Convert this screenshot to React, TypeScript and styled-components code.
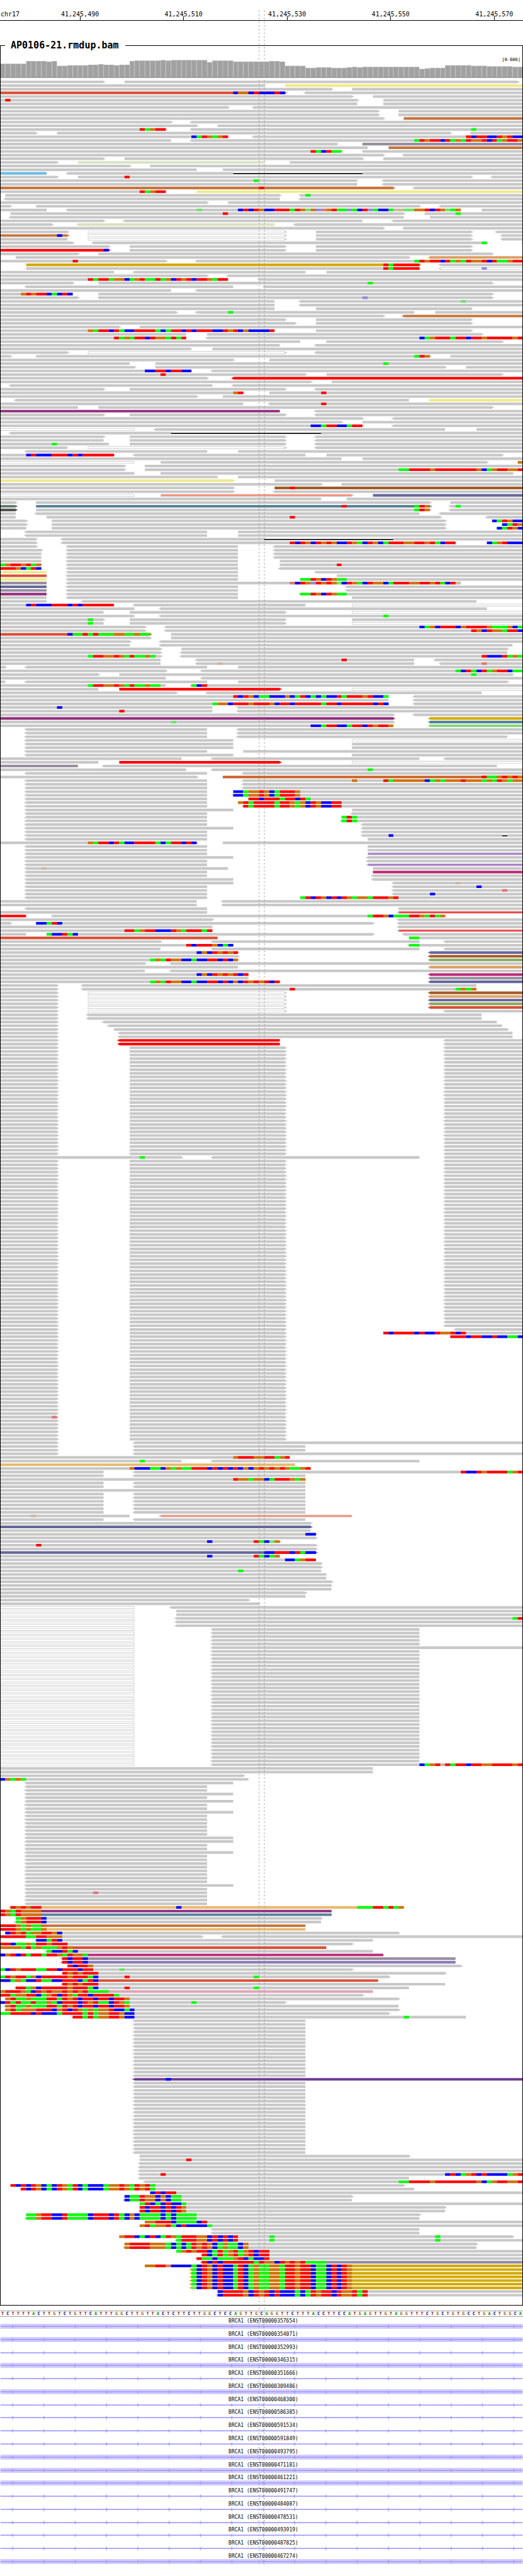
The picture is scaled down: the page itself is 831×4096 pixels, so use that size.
import React from "react";
import styled, { createGlobalStyle } from "styled-components";

/* ---------- scale ---------- */

const BASES = 101;
const BASE_W = 9.9;
const ROW_H = 7;
const READ_H = 5;
const VIEW_X = 1.2;
const VIEW_W = 997.6;
const xOf = (base: number) => Math.round(base * BASE_W);

/* ---------- data ---------- */

const TICKS = ["41,245,490", "41,245,510", "41,245,530", "41,245,550", "41,245,570"];

const SEQUENCE =
  "TCTTTTACTTGTCTGTTCATTTGGCTTGTTACTCTTCTTGGCTCCAGTTGCAGGTTCTTTACCTTCCATGAGTTGTAGGTTTCTGCTGTGCCTGACTGGCA";

/* [number of bases, bar height] */
const COVERAGE: [number, number][] = [
  [5, 26], [4, 31], [1, 30], [1, 31], [2, 22], [4, 23], [2, 24], [1, 25], [2, 24], [1, 23], [2, 24],
  [1, 31], [5, 32], [1, 33], [1, 32], [7, 33], [1, 29], [4, 32], [7, 30], [2, 31], [1, 30], [4, 22],
  [2, 18], [3, 19], [3, 18], [1, 19], [1, 20], [1, 19], [11, 20], [1, 16], [1, 17], [3, 18], [5, 23],
  [3, 22], [5, 21], [2, 20],
];

/*
 * One line per pileup row, in bases from the left edge of the region.
 *   12-40>   read, with < or > where it has a strand tip; a leading letter picks its colour
 *   @12rgb   mismatching bases from position 12 (capitals: low quality)
 *   =45-70   deletion
 *   5x ...   row repeated
 */
const PILEUP = `
0-20> 24-100>
0-51> Y55-101
0-64> 68-101
S0-55> @45boobrbbbrb <59-101
0-68> 72-101
0-69> 74-101 @1r
0-69 74-101
0-44> <49-101
2x 0-73> 77-101
0-74> C78-101
0-33> <37-101
0-38> 42-101
0-32> @27rgorr <37-101 @91g
0-7> 11-87> <91-101
0-44> @37bgrogor <49-101 @90rbrrbbrorbb
0-33 <37-101 @80grorrbrgogroorbrgorro
0-65> V70-101
0-71 C75-101
0-66> @60rgbrgg 70-101
0-74> <78-101
0-20> 24-70> 74-101
0-11> L15-51> 56-101
0-25> 29-101
0-38 43-101
K0-9 <13-101 =45-70
0-11> 15-91> @24r <95-101
0-69 @49g <74-101
0-69 <74-101
C0-76> @50r <80-101
0-32 @27rgorr Y38-101
1-54> <58-101 @59g
<1-54 <58-101
0-40> 44-101
0-2> 7-81> <85-101
0-9 <13-89 @38G @46brbrobbrrrgroGoBRorggBgbrBgbbgOOGGoorbroGgo 93-101
2-78> @43r 82-101 @88g
<2-78 83-101
0-20> <24-70 <76-101
0-10> L<15-53 <57-101
0-74> <78-101
0-13> W17-55> 61-91> <96-101
C0-13> @11b W17-55> 61-91> <97-101
0-13 W17-55> 61-91> <97-101
0-14> <18-94 @93g <101-101
0-21> 25-55> 61-91>
R0-21> @20b 25-55> 61-91>
0-15> 19-95>
3-79> N<83-101
0-32> @14r <38-101 @80grorrbrgogroorbrggorr
M5-81> @74rgrrrrr <85-101
5-81> @74rgrrrrr W<85-101 @93B
0-22 <26-59 63-101
0-40> <44-101
0-44 @17rgrrgoobgorggrgobrorbrrogrr <50-101
0-14> 19-95> @71g
<5-45 <51-101
0-33 <38-101
0-14 @4ororrbgbrb 19-95>
0-15> 19-95> @70B
0-53 <58-101 @89G
0-53 <58-101
0-53 61-91>
0-34> <38-80 @44g 84-101
0-74> C<78-101
0-55> 61-91>
0-57> 61-91>
0-23> 27-101
0-53 @17ogrrbrgbbrrrrgbgrrbrbrrrbbrorbobbbbr 61-91>
0-36 40-93>
0-36 @22rgogrrbroogrgr <40-101 @81bgorrrgrrbrrorrrrror
0-58 63-97>
0-54 <61-101
0-37 41-101
0-13> W17-55> <61-101
0-2> 7-83> @80gro 87-101
0-45> 52-101
0-25 30-101 @74g
0-26> 30-86> 90-101
0-37 @28bbrrbrrbb <41-101
0-59> @31r 63-97>
0-40> R<45-101
0-60> 64-101
<2-41 <45-101
0-20> 25-55> <61-101
0-47> @45or 52-101 @62r
0-38> 43-101
<3-79 Y<83-101
0-47 <52-101 @62r
0-15 19-95>
P0-54 <61-101
0-20> 25-55> <61-101
0-70> <76-101
0-66> 70-101
0-70> @60bbgrrbbgrr <76-101
W0-26 <30-86 92-101
<2-101 =33-62
0-20> 25-55> <61-101
0-20 25-55> <61-101
0-21 @10g 25-55> <61-101
0-13 W17-55> <61-101
<5-40 46-101
0-22> @5brbbbrrrbrbrrrrrr <26-59 63-97>
0-66 70-101
W0-26 31-94> 100-101 @100o
0-24> 28-101
0-24> 28-101 @77ggrrrrorrrrrrrrobgorroor
0-26 31-99>
0-42 46-101
Y0-45> 53-101
0-62> 66-101
0-45> E53-101 @56r
0-45> <53-101
W0-26 F31-68> I72-101
0-62 67-101
0-3> 7-83> 87-101
T0-3> U7-83> @66r @80gro <87-101 @88g
D0-3> 7-83> @80gro <87-101
0-3 <7-81 <85-101
0-3 9-85> @56r <94-101
0-5> 10-86> 95-101 @95bgrobb
0-5> 10-86> 97-101 @97bgro
0-5 10-86> 96-101 @96bgrob
2x <5-40 46-101
0-7> <12-101 =51-76
0-7> <12-88 @56rbrobrorobbrogbrobgrrroorrorgbrr 94-101 @94bgorbbb
0-7> <13-46 <53-101
0-8> <13-46 <53-101
2x 0-8 <13-46 <53-101
0-8 <13-46 54-101
0-8 @0gorrorgo <13-46 54-101 @65r
0-8 @0rrrobgrb <13-46 <54-101
Y0-9 <13-46 <61-101
S0-9 <13-46 65-101
Y0-9 <13-46 58-101 @58ggrobrogg
V0-9 <13-89 @56RbroBroroGbrogbroobgrrroorrorgbrO
I0-9 <13-46 <67-101
V0-9 <13-46 <67-101
P0-9 <13-46 <58-101 @58ggrobrogg
0-9 <13-46 68-101
0-9 <16-92
0-22 @5brbbbrrrbrbrrrrrr <26-59 W68-101
0-26 <31-94
0-20 25-55> W68-101
0-26 <31-101 @74g
0-20> @17g 25-55> 68-101
0-20 @17g 25-55> W68-101
0-28> <32-101 @81bgobrrrborrrrogggobg
0-28> <32-101 @91robroogrrb
S0-29> @13bggrgrgggooggogg 33-101
0-29> 33-101
0-25> <31-101
0-25 <31-99
0-31> 35-98>
0-31> <35-98
0-31> @17grroorogrggog <35-101 @93rbbbrgog
0-31 <38-80 @66r <84-101
0-31 <38-80 @42O <85-101 @93R
0-1> <5-40 46-101
0-32> <39-101 @88gbrgbrgorrbgg
0-19> 23-99> @91g
0-32 <39-101
0-1 <5-40 46-98>
0-32 @17grroorogrggogg <37-101 @37gbr
0-19 R23-54> W68-101
0-34> <40-93
0-75 @45rbrobggbbbobgrbgbgbbrgrrrorbbg <80-101
0-75 <80-101
0-75 @41goobrrrorrrobrrbrrrrrgrrbrrrrrrbrb <80-101
0-41 @11b <46-101
0-41 @23r <46-101
0-76> <80-101
P0-76> M<83-101
0-76> @33G U<83-101
0-76 @60bbgrrbbgrrbrorro G<83-101
2x <5-40 <46-101
<5-40 <46-98
<5-45 W68-101
2x <5-45 68-101
<5-40 47-101
<5-45 68-101
0-35 <41-81 <86-101
0-19 R23-54> W68-101
V0-15 <20-96
0-36 <41-101 @71g
<5-40 <47-101
0-38> H43-101 @93rggororo
<5-40 <47-101 @68o @74rgoooooobgogooorooogogrogoo
2x <5-40 <47-101
<5-40 45-101 @45bbgoorobgrrro
<5-40 <45-101 @45bbgoorobgrrro
<5-40 48-101 @48rrbrrrgrrbrg
<5-40 46-101 @46orgrrrrgrrogobrobbrr
<5-40 <47-101 @47rgrrrrgrrogobrobbrr
<5-45 68-101
<5-40 <68-101
<5-40 66-101 @66grg
<5-40 <66-101 @66grg
<5-40 <70-101
<5-45 <70-101
<5-40 <70-101
<5-40 <70-101 @75b =97-98
<5-40 71-101
0-38> @17ogrrbrgbbrrrrgbgrrbrb 43-101
2x <5-40 71-101
<5-40 J71-101
<5-45 <71-101
<5-40 <71-101
<5-40 J<71-101
<5-44 @8O 72-101
<5-40 Q72-101
<5-40 <72-101
<5-45 <72-101
<5-45 <76-101 @88O
<5-40 <76-101 @92b
<5-40 <76-101 @97R
<5-40 <76-101 @83b
<5-40 58-101 @58grbrobrbrogoogrrror
2x 0-38 <43-101
<5-40 77-101
0-40 Z<77-101
R0-5 10-86> @71grrobgggrrogrgo
0-41> <77-101
0-2> 7-72> @7bbgrb <77-101
0-41 <77-101
0-41 @24rrgorrbbbrogrrrgr Z<77-101
0-5 9-72> @9gbbrgb <78-101
S0-42 79-101 @79gg
0-31> <41-81 <86-101
0-45 @36rbrrrobgb <79-101 @79gg
0-31 <41-81 <86-101
0-46> @38bobroror I<83-101
0-46> E<83-101
0-46> @29gogroobbgbbrrbrbo A<83-101
0-28> <33-101
0-46 N<83-101
0-28 <33-101
0-48 @38bobrororbr Q<83-101
0-48 V<83-101
0-54 @29gogroobbgbbrrbrbobrororbr I<83-101
0-11> <16-92
0-11> <16-92 @56r @88gogo
0-11> W17-55> E<83-101
0-11> W17-55> N<83-101
0-11> W17-55> I<83-101
0-11> W17-55> A<83-101
0-11> W17-55> S<83-101
0-11> W17-55> <86-101
2x 0-11> <17-93
0-11> <20-96
0-11> <21-97
0-11> 22-98>
2x 0-11> <23-99
2x 0-11> R<23-54 <86-101
30x 0-11> 25-55> <86-101
0-35> @27g <41-81 <86-101
46x 0-11> 25-55> <86-101
0-11> 25-55> <88-101
0-11> 25-55> 74-101 @74rbrrrrbrbbroorbr
0-11> 25-55> 87-101 @87rrrbrrbbrbbggb
21x 0-11> 25-55>
0-11> @10R 25-55>
6x 0-11> 25-55>
0-11> <26-101
2x 0-11> <26-59
0-11> <26-101
0-56 @45orrroorrgor
0-35 @27g <41-81
X0-57
0-59 @25obbbggbogoggrrrbrbrbrboborororoggor
0-20 <26-101 @89rbbrorrrrgor
0-20 <26-59
0-59 @45roogoobgrrrogo
2x 0-20 <26-59
0-59
6x 0-20 <26-59
0-25 @6O F<31-68
0-20 <26-59
0-60>
I0-60>
0-60
0-61> @59bb
0-61>
0-54> @40b @49rgbGo
0-61> @7r
0-61>
I0-61> @51bbrrrbrgbb
0-54 @40b @49rgbgo
0-61 @55bbgorr
2x 0-62>
0-62 @46g
2x 0-63
0-64>
2x 0-64
0-59>
0-59
0-48>
0-50>
W0-26 <33-101
2x W0-26 34-101
W0-26 <34-101 @99gr
2x W0-26 <34-101
5x W0-26 <41-81
W0-26 <41-101
31x W0-26 <41-81
W0-26 <41-101 @81bgorOrgrrbrroorrrror
2x 0-72
0-47>
0-48 @0bogog
<5-45
2x <5-40
<5-45
<5-40
<5-45
2x <5-40
<5-45
6x <5-40
2x <5-45
2x <5-40
<5-45
8x <5-40
<5-45
<5-40
<5-40 @18R
3x <5-40
X<2-78 @2rororr @34b @69gggrrgrgo
P0-64 @0rogroooo
U0-64 @0rogroooo
3-62> @3gorrrb
<3-62 @3gorrrb
C0-59 @0rrrogoggo
X0-59 @0rrrogoggo
1-77> @1brorgoorrob
0-39> @0rrrrrggrrooo <43-101
<7-72 @7bbgrb
0-68> @0rrbggogrrorrr
S0-63 @0oooogrgogggoro
<9-72 @9gbbrgb
Q0-74 @0borbrgrrgrrogroog
V<12-88 @12rbrrb
B<12-88 @12rbrrb
13-89> @13rbrro
0-68> @0gbrorrrggrrbrrrbrr @23G
12-86> @12rororrr
0-75> @0grorrgobrrrrrorrrgb @24r @49g
S0-73 @0bbgogbbrggbbrrrbgrb
<12-86 @12rororrr
<3-79 @3rrgobrrrrrorrrgb @24r @49g
O0-72 @0orrrogbroroorororgggg
0-70> @0rrgoorrbgorbrogrrbrrrrg
1-77> @1orggogggrrgrorbrrbrrbrro
0-55> @0brgrggrggogbrrrbrorggbrog @37g
<1-77 @1orggogggrrgrorbrrbrrbrro
1-77> @1orgooorrrborbrogogoorbbgb
0-75> @0ggrrrrbrbbbgrrrrgrgoorrobb
<14-90 @14rrgrgoorrobb @78g
16x <26-59
m<26-101 @32b
20x <26-59
27-79>
27-101 @36r
3x <27-101
<27-101 @31r @86brbgorbrbbbbgor
<27-79
<28-101 @77ggrrrrorrrrrrrrobgorroor
2-78> @2rbrbrobgbrogrbgbbbgoorogrorg
<4-80 @4rbrobgbrogrbgbbbgoorogrorg
29-101 @29brbrr
24-68> @24bggroobobgg
<24-68 @24bggroobobgg
27-101 @27grbgbrbbg
27-86> @27rbrrbrbro
<27-86 @27rbrrbrbro
5-81> @5ggorrbbrggggbrrrbrgbobggggbgbgggg
<5-81 @5ggorrbbrggggbrrrbrgbobggggbgbgggg
28-101 @28oorrrbggggbr
27-101 @27orgoorgbrbbbbg
2x <41-81
23-99> @23orrbgbrbgrogrrroobrbrbr @52g @84g
<34-101 @34grrroobrbrbr @52g @84g
24-92> @24orrrrooogbgbgrorobgoggbo
<24-92 @24orrrrooogbgbgrorobgoggbo
34-101 @34gororrbgrgorgorbrr
<39-101 @39rbgrgorgorbrr
<38-101 @38rggbgggorbgbbr
V<39-101 @39rbrbrrrrrrgroobrororgggg
M28-101 @28oorrRbbbbgbrobrbbgrbgoggoogrrorrbggbrbro
5x M<37-101 @37gbrobrbbgrbgoggoogrrorrbggbrbro
M<37-101 @37Gbrobrbbgrbgoggoogrrorrbggbrbro
42-101 @42brrrrobrorbrbbbgbgrorrbroorgr
<42-101 @42brrrrobrorbrbbbgbgrorrbroorgr
`;

const TRANSCRIPTS: { id: string; exon: boolean }[] = [
  { id: "ENST00000357654", exon: true },
  { id: "ENST00000354071", exon: true },
  { id: "ENST00000352993", exon: false },
  { id: "ENST00000346315", exon: true },
  { id: "ENST00000351666", exon: false },
  { id: "ENST00000309486", exon: true },
  { id: "ENST00000468300", exon: false },
  { id: "ENST00000586385", exon: false },
  { id: "ENST00000591534", exon: false },
  { id: "ENST00000591849", exon: false },
  { id: "ENST00000493795", exon: true },
  { id: "ENST00000471181", exon: true },
  { id: "ENST00000461221", exon: true },
  { id: "ENST00000491747", exon: false },
  { id: "ENST00000484087", exon: false },
  { id: "ENST00000478531", exon: false },
  { id: "ENST00000493919", exon: false },
  { id: "ENST00000487825", exon: false },
  { id: "ENST00000467274", exon: true },
];

/* ---------- colours ---------- */

const GREY = "#c8c8c8";

const READ_COLOURS: Record<string, string> = {
  "": GREY, Y: "#f0e98a", S: "#d94f37", C: "#c5763f", V: "#968da0", L: "#d8e3c0", K: "#6cbde2",
  R: "#ff0000", N: "#dba067", M: "#d4aa00", P: "#932f7d", E: "#a35a26", I: "#65689a", T: "#6d7a6e",
  U: "#568197", D: "#505352", H: "#cc6328", Q: "#bb2c7a", A: "#88aa60", G: "#80d975", X: "#e6bc70",
  B: "#8d7ab8", O: "#dda5b6", m: "#6f3a92",
};

/* reads drawn as a grey outline round another colour */
const INNER_COLOURS: Record<string, string> = {
  W: "#ffffff", F: "#ff8c76", J: "#ab78d1", Z: "#ff3c3c",
};

const BASE_COLOURS: Record<string, string> = {
  r: "#ff0000", g: "#00ff00", b: "#0000ff", o: "#d17105",
  R: "#e07678", G: "#66e666", B: "#8c8cdc", O: "#cdb79e",
};

const LETTER_COLOURS: Record<string, string> = {
  A: "#009600", C: "#000096", G: "#a0640a", T: "#a00a0a",
};

/* ---------- pileup drawing ---------- */

const ROWS: string[] = PILEUP.trim()
  .split("\n")
  .flatMap((line) => {
    const m = /^(\d+)x (.*)$/.exec(line);
    return m ? Array<string>(Number(m[1])).fill(m[2]) : [line];
  });

function readPath(start: number, end: number, left: boolean, right: boolean) {
  const tip = (x: number, d: number) =>
    `M${x} 1h${2 * d}v1h${2 * d}v1h${-2 * d}v1h${-2 * d}z`;
  return (
    `M${start} 0H${end}V${READ_H}H${start}z` + (left ? tip(start, -1) : "") + (right ? tip(end, 1) : "")
  );
}

function runs(text: string) {
  return text.match(/(.)\1*/g) ?? [];
}

function Row({ spec, y }: { spec: string; y: number }) {
  const shapes: React.ReactNode[] = [];
  spec.split(" ").forEach((token, i) => {
    const read = /^([A-Za-z]?)(<?)(\d+)-(\d+)(>?)$/.exec(token);
    if (read) {
      const [, colour, left, s, e, right] = read;
      const start = xOf(Number(s));
      const end = xOf(Number(e));
      const inner = INNER_COLOURS[colour];
      shapes.push(
        <path key={i} d={readPath(start, end, !!left, !!right)} fill={inner ? GREY : READ_COLOURS[colour]} />
      );
      if (inner) {
        const from = start === 0 ? 0 : start + 1;
        const to = e === String(BASES) ? end : end - 1;
        shapes.push(<rect key={`${i}i`} x={from} y={1} width={to - from} height={3} fill={inner} />);
      }
      return;
    }
    if (token[0] === "=") {
      const [s, e] = token.slice(1).split("-").map(Number);
      const width = xOf(e) - xOf(s);
      shapes.push(<rect key={i} x={xOf(s)} y={0} width={width} height={READ_H} fill="#fff" />);
      shapes.push(<rect key={`${i}d`} x={xOf(s)} y={2} width={width} height={2} fill="#000" />);
      return;
    }
    const mismatch = /^@(\d+)(\w+)$/.exec(token);
    if (!mismatch) return;
    let at = Number(mismatch[1]);
    runs(mismatch[2].replace(/\d/g, "")).forEach((run, j) => {
      const x = xOf(at);
      at += run.length;
      shapes.push(
        <rect key={`${i}m${j}`} x={x} y={0} width={xOf(at) - x} height={READ_H} fill={BASE_COLOURS[run[0]]} />
      );
    });
  });
  return <g transform={`translate(0 ${y})`}>{shapes}</g>;
}

function Coverage() {
  const heights = COVERAGE.flatMap(([n, h]) => Array<number>(n).fill(h));
  return (
    <Chart viewBox={`${VIEW_X} 88 ${VIEW_W} 61`} role="img" aria-label="Coverage">
      {heights.map((h, i) => {
        const x = xOf(i);
        const w = xOf(i + 1) - x;
        return (
          <g key={i}>
            <rect x={x} y={148 - h} width={w} height={h} fill="#b2b2b2" />
            <rect x={x + 1} y={149 - h} width={w - 2} height={h - 1} fill="#a1a1a1" />
          </g>
        );
      })}
      <rect x={0} y={148} width={1000} height={1} fill="#6e6e6e" />
    </Chart>
  );
}

function Pileup() {
  return (
    <Chart viewBox={`${VIEW_X} 149 ${VIEW_W} 4261`} role="img" aria-label="Aligned reads">
      {ROWS.map((spec, r) => (
        <Row key={r} spec={spec} y={154 + r * ROW_H} />
      ))}
    </Chart>
  );
}

function Transcript({ exon }: { exon: boolean }) {
  const arrows = Array.from({ length: 17 }, (_, i) => 21 + i * 60);
  return (
    <Chart viewBox="0 0 1000 10" aria-hidden="true">
      {exon && <rect width={1000} height={10} fill="#d2cdff" />}
      <rect y={4} width={1000} height={2} fill="#a09bff" />
      {arrows.map((x) => (
        <path key={x} d={`M${x} 5L${x + 3} 1V9z`} fill="#a09bff" />
      ))}
    </Chart>
  );
}

/* ---------- layout ---------- */

const GlobalStyle = createGlobalStyle`
  body {
    margin: 0;
    background: #fff;
    color: #000;
    font-family: "DejaVu Sans Mono", monospace;
  }
`;

const Page = styled.main`
  position: relative;
  padding-bottom: 15px;
  overflow: hidden;
`;

const Ruler = styled.header`
  display: grid;
  grid-template-columns: 5.4% repeat(5, 19.8%);
  padding-top: 17px;
  border-bottom: 1px solid #000;
  overflow: hidden;
  font-size: 10px;
  line-height: 12px;
`;

const Chromosome = styled.span`
  padding-left: 1px;
`;

const Tick = styled.span`
  display: flex;
  flex-direction: column;
  align-items: center;

  &::after {
    content: "";
    width: 1px;
    height: 6px;
    margin-top: -3px;
    background: #000;
  }
`;

const Track = styled.section`
  display: flow-root;
  margin-top: 39px;
  border: 1px solid #000;
`;

const TrackTitle = styled.h2`
  position: relative;
  width: fit-content;
  margin: -10px 0 -8px 7px;
  padding: 0 10px 0 9px;
  background: #fff;
  font-size: 15px;
  font-weight: bold;
  line-height: 18px;
`;

const CoverageBox = styled.div`
  position: relative;
`;

const RangeLabel = styled.span`
  position: absolute;
  top: 17px;
  right: 3px;
  font-size: 7px;
  line-height: 10px;
`;

const Chart = styled.svg`
  display: block;
  width: 100%;
`;

const Sequence = styled.div`
  display: grid;
  grid-template-columns: repeat(${BASES}, 1fr);
  margin-top: 8px;
  border: 1px solid #a0a0a0;
  border-width: 1px 0;
  font-size: 7px;
  font-weight: bold;
  line-height: 8px;
  text-align: center;
`;

const Base = styled.span<{ $base: string }>`
  color: ${(p) => LETTER_COLOURS[p.$base]};
`;

const GeneList = styled.ul`
  display: grid;
  grid-auto-rows: 1fr;
  aspect-ratio: 1000 / 475;
  margin: 0;
  padding: 0;
  list-style: none;
`;

const Gene = styled.li`
  display: flex;
  flex-direction: column;
  justify-content: flex-end;
  padding-bottom: 1px;
`;

const GeneLabel = styled.span`
  padding-left: 6px;
  font-size: 8px;
  line-height: 8px;
  text-align: center;
`;

const Guides = styled.svg`
  position: absolute;
  top: 0;
  left: 0;
  width: 100%;
  pointer-events: none;
`;

export default function App() {
  return (
    <Page>
      <GlobalStyle />
      <Ruler>
        <Chromosome>chr17</Chromosome>
        {TICKS.map((t) => (
          <Tick key={t}>{t}</Tick>
        ))}
      </Ruler>

      <Track>
        <TrackTitle>AP0106-21.rmdup.bam</TrackTitle>
        <CoverageBox>
          <Coverage />
          <RangeLabel>[0-606]</RangeLabel>
        </CoverageBox>
        <Pileup />
      </Track>

      <Sequence>
        {SEQUENCE.split("").map((b, i) => (
          <Base key={i} $base={b}>
            {b}
          </Base>
        ))}
      </Sequence>

      <GeneList>
        {TRANSCRIPTS.map((t) => (
          <Gene key={t.id}>
            <GeneLabel>BRCA1 ({t.id})</GeneLabel>
            <Transcript exon={t.exon} />
          </Gene>
        ))}
      </GeneList>

      <Guides viewBox="0 0 1000 4927" aria-hidden="true">
        <path d="M495.5 20V4907M505.5 20V4907" stroke="#8c8c8c" strokeDasharray="3 4" fill="none" />
      </Guides>
    </Page>
  );
}
